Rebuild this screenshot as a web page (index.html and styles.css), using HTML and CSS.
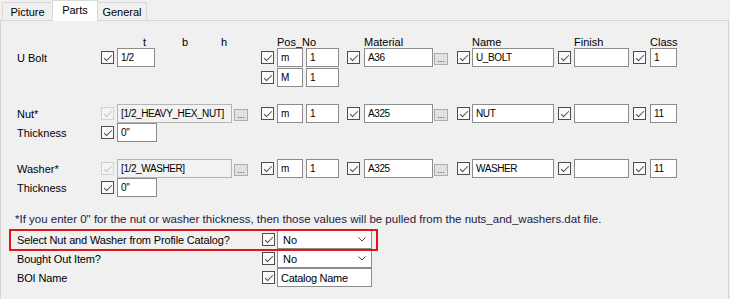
FILE: index.html
```html
<!DOCTYPE html>
<html lang="en">
<head>
  <meta charset="utf-8">
  <title>Parts</title>
  <link rel="stylesheet" href="styles.css">
</head>
<body>

  <div class="tabs">
    <span class="tab tab-picture">Picture</span>
    <span class="tab tab-parts active">Parts</span>
    <span class="tab tab-general">General</span>
  </div>

  <div class="panel">
    <!-- column headers -->
    <div class="row head">
      <span></span><span></span>
      <span class="dims"><span>t</span><span>b</span><span>h</span></span>
      <span></span>
      <span class="span2">Pos_No</span>
      <span></span>
      <span>Material</span>
      <span></span>
      <span>Name</span>
      <span></span>
      <span>Finish</span>
      <span></span>
      <span>Class</span>
    </div>

    <div class="row">
      <span class="label">U Bolt</span>
      <span class="cb"></span>
      <span><input class="field w-t" type="text" value="1/2"></span>
      <span class="cb"></span>
      <span><input class="field w-m" type="text" value="m"></span>
      <span><input class="field w-n" type="text" value="1"></span>
      <span class="cb"></span>
      <span class="pick"><input class="field w-mat" type="text" value="A36"><button class="dots">...</button></span>
      <span class="cb"></span>
      <span><input class="field w-name" type="text" value="U_BOLT"></span>
      <span class="cb"></span>
      <span><input class="field w-fin" type="text" value=""></span>
      <span class="cb"></span>
      <span><input class="field w-cls" type="text" value="1"></span>
    </div>
    <div class="row second">
      <span></span><span></span><span></span>
      <span class="cb"></span>
      <span><input class="field w-m" type="text" value="M"></span>
      <span><input class="field w-n" type="text" value="1"></span>
    </div>

    <div class="group">
      <div class="row">
        <span class="label">Nut*</span>
        <span class="cb off"></span>
        <span class="pick wide"><input class="field off w-nut" type="text" value="[1/2_HEAVY_HEX_NUT]" disabled><button class="dots">...</button></span>
        <span class="cb"></span>
        <span><input class="field w-m" type="text" value="m"></span>
        <span><input class="field w-n" type="text" value="1"></span>
        <span class="cb"></span>
        <span class="pick"><input class="field w-mat" type="text" value="A325"><button class="dots">...</button></span>
        <span class="cb"></span>
        <span><input class="field w-name" type="text" value="NUT"></span>
        <span class="cb"></span>
        <span><input class="field w-fin" type="text" value=""></span>
        <span class="cb"></span>
        <span><input class="field w-cls" type="text" value="11"></span>
      </div>
      <div class="row">
        <span class="label">Thickness</span>
        <span class="cb"></span>
        <span><input class="field w-thk" type="text" value="0&quot;"></span>
      </div>
    </div>

    <div class="group">
      <div class="row">
        <span class="label">Washer*</span>
        <span class="cb off"></span>
        <span class="pick wide"><input class="field off w-nut" type="text" value="[1/2_WASHER]" disabled><button class="dots">...</button></span>
        <span class="cb"></span>
        <span><input class="field w-m" type="text" value="m"></span>
        <span><input class="field w-n" type="text" value="1"></span>
        <span class="cb"></span>
        <span class="pick"><input class="field w-mat" type="text" value="A325"><button class="dots">...</button></span>
        <span class="cb"></span>
        <span><input class="field w-name" type="text" value="WASHER"></span>
        <span class="cb"></span>
        <span><input class="field w-fin" type="text" value=""></span>
        <span class="cb"></span>
        <span><input class="field w-cls" type="text" value="11"></span>
      </div>
      <div class="row">
        <span class="label">Thickness</span>
        <span class="cb"></span>
        <span><input class="field w-thk" type="text" value="0&quot;"></span>
      </div>
    </div>

    <p class="note">*If you enter 0" for the nut or washer thickness, then those values will be pulled from the nuts_and_washers.dat file.</p>

    <div class="opts">
      <div class="opt hl">
        <span class="label">Select Nut and Washer from Profile Catalog?</span>
        <span class="cb"></span>
        <span class="combo">No<svg width="8" height="5" viewBox="0 0 8 5"><polyline points="0.5,0.5 4,4 7.5,0.5" fill="none" stroke="#444" stroke-width="1"/></svg></span>
      </div>
      <div class="opt">
        <span class="label">Bought Out Item?</span>
        <span class="cb"></span>
        <span class="combo">No<svg width="8" height="5" viewBox="0 0 8 5"><polyline points="0.5,0.5 4,4 7.5,0.5" fill="none" stroke="#444" stroke-width="1"/></svg></span>
      </div>
      <div class="opt">
        <span class="label">BOI Name</span>
        <span class="cb"></span>
        <span><input class="field w-boi" type="text" value="Catalog Name"></span>
      </div>
    </div>
  </div>

</body>
</html>
```

FILE: styles.css
```css
body {
  margin: 0;
  background: #f0f0f0;
  font-family: "Liberation Sans", Arial, sans-serif;
  font-size: 11px;
  color: #000;
}

/* tab strip */
.tabs {
  display: flex;
  align-items: flex-end;
  height: 20px;
  padding-left: 2px;
  position: relative;
  z-index: 1;
}

.tab {
  box-sizing: border-box;
  height: 18px;
  padding-top: 2px;
  line-height: 15px;
  text-align: center;
  border: 1px solid #d9d9d9;
  border-bottom: none;
  background: #f0f0f0;
  margin-left: -1px;
}

.tab:first-child {
  margin-left: 0;
}

.tab.active {
  height: 21px;
  margin-bottom: -1px;
  padding-top: 1px;
  line-height: 17px;
  background: #fff;
  position: relative;
  z-index: 1;
}

.tab-picture { width: 51px; }
.tab-parts { width: 46px; }
.tab-general { width: 50px; }

.panel {
  box-sizing: border-box;
  height: 279px;
  margin-right: 1px;
  padding: 15px 0 0 16px;
  border: 1px solid #d4d4d4;
  border-bottom: none;
}

/* parts table */
.row {
  display: grid;
  grid-template-columns: 84px 16px 144px 16px 29px 41px 17px 93px 15px 86px 16px 59px 17px 30px;
  align-items: center;
  height: 19px;
}

.head {
  height: 12px;
  line-height: 12px;
}

.span2 {
  grid-column: span 2;
}

.dims {
  display: flex;
  padding-left: 26px;
}

.dims span {
  width: 39px;
}

.second {
  margin-top: 1px;
}

.group {
  margin-top: 17px;
}

.row > span {
  display: flex;
  align-items: center;
}

.pick {
  gap: 1px;
}

.pick.wide {
  gap: 2px;
}

.field {
  box-sizing: border-box;
  height: 19px;
  margin: 0;
  padding: 0 3px;
  border: 1px solid #8c8c8c;
  background: #fff;
  font-family: "Liberation Sans", Arial, sans-serif;
  font-size: 10px;
  letter-spacing: -0.4px;
  color: #000;
  outline: none;
}

.field.off {
  background: #f2f2f2;
  border-color: #b4b4b4;
  color: #000;
}

.w-t { width: 38px; }
.w-thk { width: 40px; }
.w-nut { width: 115px; }
.w-m { width: 26px; }
.w-n { width: 33px; }
.w-mat { width: 69px; }
.w-name { width: 82px; }
.w-fin { width: 55px; }
.w-cls { width: 27px; }

.w-boi {
  width: 95px;
  font-size: 11px;
  letter-spacing: -0.3px;
}

.dots {
  box-sizing: border-box;
  width: 14px;
  height: 12px;
  margin: 3px 0 0;
  padding: 0;
  border: 1px solid #adadad;
  background: #e1e1e1;
  font-family: "Liberation Sans", Arial, sans-serif;
  font-size: 9px;
  line-height: 11px;
  color: #333;
  text-align: center;
}

/* checkbox */
.row > .cb,
.opt > .cb {
  display: block;
}

.cb {
  box-sizing: border-box;
  width: 13px;
  height: 13px;
  border: 1px solid #4d4d4d;
  background: #fafafa;
  position: relative;
}

.cb::after {
  content: "";
  position: absolute;
  left: 3.5px;
  top: 0.5px;
  width: 3px;
  height: 7px;
  border: solid #4d4d4d;
  border-width: 0 1px 1px 0;
  transform: rotate(45deg);
}

.cb.off {
  border-color: #d0d0d0;
  background: #f4f4f4;
}

.cb.off::after {
  border-color: #c4c4c4;
}

/* footer */
.note {
  margin: 15px 0 0 -2px;
  font-size: 11.5px;
  line-height: 14px;
  color: #24203a;
}

.opts {
  margin-top: 4px;
}

.opt {
  display: grid;
  grid-template-columns: 245px 15px 95px;
  align-items: center;
  height: 19px;
}

.opt .label {
  letter-spacing: -0.15px;
}

.combo {
  box-sizing: border-box;
  display: flex;
  align-items: center;
  justify-content: space-between;
  width: 95px;
  height: 19px;
  padding: 0 5px 0 5px;
  border: 1px solid #8c8c8c;
  background: #fff;
}

.hl {
  position: relative;
}

.hl::before {
  content: "";
  position: absolute;
  left: -8px;
  top: -1px;
  width: 369px;
  height: 22px;
  box-sizing: border-box;
  border: 2px solid #e3151a;
  pointer-events: none;
}
```
